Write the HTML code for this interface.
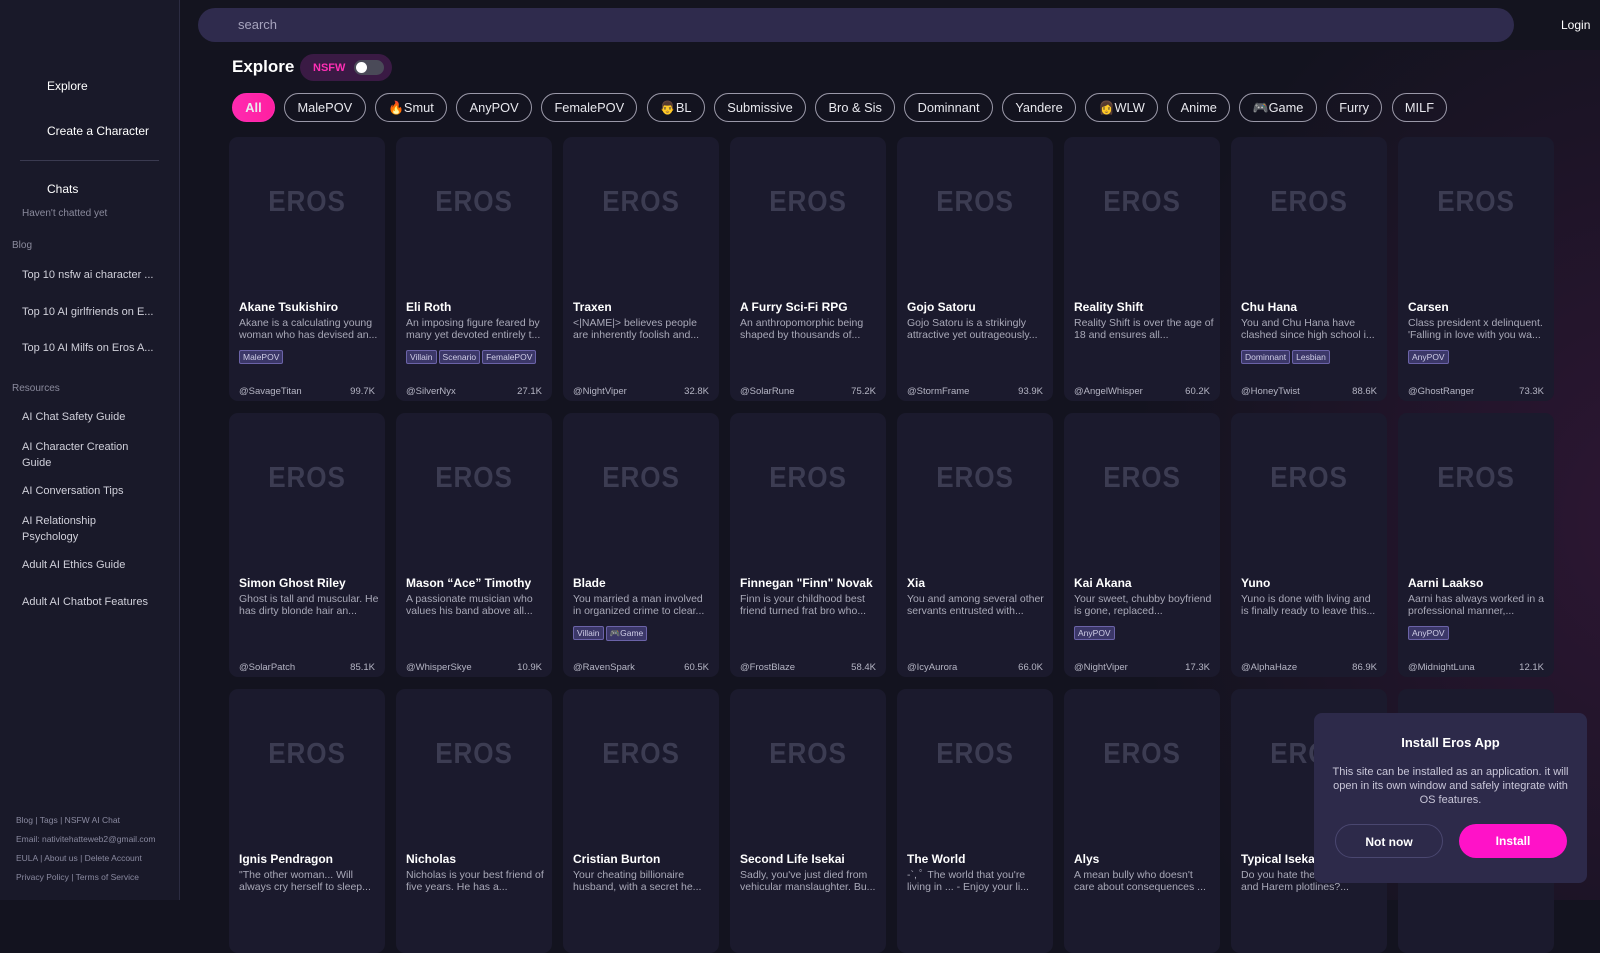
<!DOCTYPE html>
<html><head><meta charset="utf-8"><style>
*{box-sizing:border-box;margin:0;padding:0}
body{width:1600px;height:900px;overflow:hidden;background:#13131f;font-family:"Liberation Sans","Noto Sans CJK JP",sans-serif;color:#fff;position:relative}
.side{position:absolute;left:0;top:0;width:180px;height:900px;background:#191929;border-right:1px solid #2c2c42}
.side .nav{position:absolute;left:47px;font-size:12px;color:#fff}
.side .sec{position:absolute;left:12px;font-size:10px;color:#8a8a9c}
.side .it{position:absolute;left:22px;font-size:11px;color:#d0d0da;width:140px;line-height:15.5px}
.foot{position:absolute;left:16px;font-size:8.5px;color:#8a8aa0}
.main{position:absolute;left:180px;top:0;right:0;height:900px;background:radial-gradient(ellipse 520px 620px at 1470px 520px,#2d1633 0%,rgba(19,19,31,0) 100%)}
.top{position:absolute;left:180px;top:0;right:0;height:50px;background:#14141f}
.search{position:absolute;left:198px;top:8px;width:1316px;height:34px;border-radius:17px;background:#2f2b4d;color:#a6a3bd;font-size:13px;line-height:34px;padding-left:40px}
.login{position:absolute;left:1561px;top:18px;font-size:12px}
.expl{position:absolute;left:232px;top:57px;font-size:17px;font-weight:bold}
.nsfw{position:absolute;left:300px;top:54px;width:92px;height:27px;border-radius:14px;background:#3a1a44}
.nsfw b{position:absolute;left:13px;top:8px;font-size:11px;color:#ff2fb5}
.tog{position:absolute;left:54px;top:6px;width:30px;height:15px;border-radius:8px;background:#4a4a58}
.tog:after{content:"";position:absolute;left:2px;top:2px;width:11px;height:11px;border-radius:50%;background:#fff}
.pills{position:absolute;left:232px;top:93px;display:flex;gap:9.2px}
.pills span{height:29px;border:1px solid #9a98a8;border-radius:15px;padding:0 12.3px;font-size:12.8px;line-height:27px;color:#e8e8ee;white-space:nowrap}
.pills span.a{background:linear-gradient(90deg,#ff2ab0,#ff1fa0);border-color:#ff2ab0;font-weight:bold}
.card{position:absolute;width:156px;height:264px;border-radius:9px;background:#1b1a2d;overflow:hidden}
.logo{position:absolute;left:0;right:0;top:49px;text-align:center;font-size:29px;color:#3c3c52;letter-spacing:1px;font-weight:bold;transform:scaleX(.9)}
.t{position:absolute;left:10px;top:163px;font-size:12px;font-weight:bold;white-space:nowrap}
.d{position:absolute;left:10px;top:180px;width:140px;font-size:10.5px;line-height:12px;color:#a9a9b8;height:24px;overflow:hidden;white-space:normal}
.tags{position:absolute;left:10px;top:210px;width:140px}
.tags i{display:inline-block;font-style:normal;font-size:8.5px;color:#cfcde6;background:#3b3768;border:1px solid #6b63a8;border-radius:2px;padding:1px 3px;margin:0 2px 3px 0}
.u{position:absolute;left:10px;top:249px;font-size:9.5px;color:#b5b5c4}
.n{position:absolute;right:10px;top:249px;font-size:9.5px;color:#b5b5c4}
.pop{position:absolute;left:1314px;top:713px;width:273px;height:170px;border-radius:8px;background:#2d2a4a;text-align:center}
.pop h3{font-size:13px;margin-top:22px}
.pop p{font-size:11px;color:#c8c6d8;line-height:14px;margin:15px 16px 0}
.b1,.b2{position:absolute;top:111px;width:108px;height:34px;border-radius:17px;font-size:12px;font-weight:bold;line-height:34px}
.b1{left:21px;border:1px solid #4a4770}
.b2{left:145px;background:#ff12c8}
</style></head><body>
<div class="main"></div>
<div class="top"></div>
<div class="side">
<div class="nav" style="top:79px">Explore</div>
<div class="nav" style="top:124px">Create a Character</div>
<div style="position:absolute;left:20px;top:160px;width:139px;height:1px;background:#3a3a50"></div>
<div class="nav" style="top:182px">Chats</div>
<div class="sec" style="left:22px;top:208px">Haven't chatted yet</div>
<div class="sec" style="top:240px">Blog</div>
<div class="it" style="top:268px">Top 10 nsfw ai character ...</div>
<div class="it" style="top:305px">Top 10 AI girlfriends on E...</div>
<div class="it" style="top:341px">Top 10 AI Milfs on Eros A...</div>
<div class="sec" style="top:383px">Resources</div>
<div class="it" style="top:410px">AI Chat Safety Guide</div>
<div class="it" style="top:440px;width:115px">AI Character Creation Guide</div>
<div class="it" style="top:484px">AI Conversation Tips</div>
<div class="it" style="top:514px;width:100px">AI Relationship Psychology</div>
<div class="it" style="top:558px">Adult AI Ethics Guide</div>
<div class="it" style="top:595px">Adult AI Chatbot Features</div>
<div class="foot" style="top:815px">Blog | Tags | NSFW AI Chat</div>
<div class="foot" style="top:834px">Email: nativitehatteweb2@gmail.com</div>
<div class="foot" style="top:853px">EULA | About us | Delete Account</div>
<div class="foot" style="top:872px">Privacy Policy | Terms of Service</div>
</div>
<div class="search">search</div>
<div class="login">Login</div>
<div class="expl">Explore</div>
<div class="nsfw"><b>NSFW</b><div class="tog"></div></div>
<div class="pills"><span class="a">All</span><span>MalePOV</span><span>🔥Smut</span><span>AnyPOV</span><span>FemalePOV</span><span>👨BL</span><span>Submissive</span><span>Bro &amp; Sis</span><span>Dominnant</span><span>Yandere</span><span>👩WLW</span><span>Anime</span><span>🎮Game</span><span>Furry</span><span>MILF</span></div>

<div class="card" style="left:229px;top:137px"><div class="logo">EROS</div><div class="t">Akane Tsukishiro</div><div class="d">Akane is a calculating young woman who has devised an...</div><div class="tags"><i>MalePOV</i></div><div class="u">@SavageTitan</div><div class="n">99.7K</div></div>
<div class="card" style="left:396px;top:137px"><div class="logo">EROS</div><div class="t">Eli Roth</div><div class="d">An imposing figure feared by many yet devoted entirely t...</div><div class="tags"><i>Villain</i><i>Scenario</i><i>FemalePOV</i></div><div class="u">@SilverNyx</div><div class="n">27.1K</div></div>
<div class="card" style="left:563px;top:137px"><div class="logo">EROS</div><div class="t">Traxen</div><div class="d">&lt;|NAME|&gt; believes people are inherently foolish and...</div><div class="u">@NightViper</div><div class="n">32.8K</div></div>
<div class="card" style="left:730px;top:137px"><div class="logo">EROS</div><div class="t">A Furry Sci-Fi RPG</div><div class="d">An anthropomorphic being shaped by thousands of...</div><div class="u">@SolarRune</div><div class="n">75.2K</div></div>
<div class="card" style="left:897px;top:137px"><div class="logo">EROS</div><div class="t">Gojo Satoru</div><div class="d">Gojo Satoru is a strikingly attractive yet outrageously...</div><div class="u">@StormFrame</div><div class="n">93.9K</div></div>
<div class="card" style="left:1064px;top:137px"><div class="logo">EROS</div><div class="t">Reality Shift</div><div class="d">Reality Shift is over the age of 18 and ensures all...</div><div class="u">@AngelWhisper</div><div class="n">60.2K</div></div>
<div class="card" style="left:1231px;top:137px"><div class="logo">EROS</div><div class="t">Chu Hana</div><div class="d">You and Chu Hana have clashed since high school i...</div><div class="tags"><i>Dominnant</i><i>Lesbian</i></div><div class="u">@HoneyTwist</div><div class="n">88.6K</div></div>
<div class="card" style="left:1398px;top:137px"><div class="logo">EROS</div><div class="t">Carsen</div><div class="d">Class president x delinquent. 'Falling in love with you wa...</div><div class="tags"><i>AnyPOV</i></div><div class="u">@GhostRanger</div><div class="n">73.3K</div></div>

<div class="card" style="left:229px;top:413px"><div class="logo">EROS</div><div class="t">Simon Ghost Riley</div><div class="d">Ghost is tall and muscular. He has dirty blonde hair an...</div><div class="u">@SolarPatch</div><div class="n">85.1K</div></div>
<div class="card" style="left:396px;top:413px"><div class="logo">EROS</div><div class="t">Mason “Ace” Timothy</div><div class="d">A passionate musician who values his band above all...</div><div class="u">@WhisperSkye</div><div class="n">10.9K</div></div>
<div class="card" style="left:563px;top:413px"><div class="logo">EROS</div><div class="t">Blade</div><div class="d">You married a man involved in organized crime to clear...</div><div class="tags"><i>Villain</i><i>🎮Game</i></div><div class="u">@RavenSpark</div><div class="n">60.5K</div></div>
<div class="card" style="left:730px;top:413px"><div class="logo">EROS</div><div class="t">Finnegan "Finn" Novak</div><div class="d">Finn is your childhood best friend turned frat bro who...</div><div class="u">@FrostBlaze</div><div class="n">58.4K</div></div>
<div class="card" style="left:897px;top:413px"><div class="logo">EROS</div><div class="t">Xia</div><div class="d">You and among several other servants entrusted with...</div><div class="u">@IcyAurora</div><div class="n">66.0K</div></div>
<div class="card" style="left:1064px;top:413px"><div class="logo">EROS</div><div class="t">Kai Akana</div><div class="d">Your sweet, chubby boyfriend is gone, replaced...</div><div class="tags"><i>AnyPOV</i></div><div class="u">@NightViper</div><div class="n">17.3K</div></div>
<div class="card" style="left:1231px;top:413px"><div class="logo">EROS</div><div class="t">Yuno</div><div class="d">Yuno is done with living and is finally ready to leave this...</div><div class="u">@AlphaHaze</div><div class="n">86.9K</div></div>
<div class="card" style="left:1398px;top:413px"><div class="logo">EROS</div><div class="t">Aarni Laakso</div><div class="d">Aarni has always worked in a professional manner,...</div><div class="tags"><i>AnyPOV</i></div><div class="u">@MidnightLuna</div><div class="n">12.1K</div></div>

<div class="card" style="left:229px;top:689px"><div class="logo">EROS</div><div class="t">Ignis Pendragon</div><div class="d">"The other woman... Will always cry herself to sleep...</div></div>
<div class="card" style="left:396px;top:689px"><div class="logo">EROS</div><div class="t">Nicholas</div><div class="d">Nicholas is your best friend of five years. He has a...</div></div>
<div class="card" style="left:563px;top:689px"><div class="logo">EROS</div><div class="t">Cristian Burton</div><div class="d">Your cheating billionaire husband, with a secret he...</div></div>
<div class="card" style="left:730px;top:689px"><div class="logo">EROS</div><div class="t">Second Life Isekai</div><div class="d">Sadly, you've just died from vehicular manslaughter. Bu...</div></div>
<div class="card" style="left:897px;top:689px"><div class="logo">EROS</div><div class="t">The World</div><div class="d">-`, ﾟ The world that you're living in ... - Enjoy your li...</div></div>
<div class="card" style="left:1064px;top:689px"><div class="logo">EROS</div><div class="t">Alys</div><div class="d">A mean bully who doesn't care about consequences ...</div></div>
<div class="card" style="left:1231px;top:689px"><div class="logo">EROS</div><div class="t">Typical Isekai</div><div class="d">Do you hate the typical Isekai and Harem plotlines?...</div></div>
<div class="card" style="left:1398px;top:689px"><div class="logo">EROS</div><div class="t"></div><div class="d">intelligent yet emotionally...</div></div>

<div class="pop"><h3>Install Eros App</h3><p>This site can be installed as an application. it will open in its own window and safely integrate with OS features.</p><div class="b1">Not now</div><div class="b2">Install</div></div>
</body></html>
